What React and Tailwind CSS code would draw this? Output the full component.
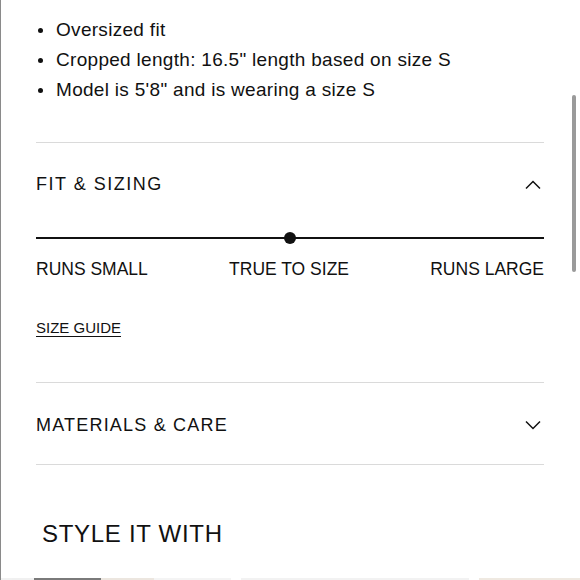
import React from 'react';

const BULLETS = [
  'Oversized fit',
  'Cropped length: 16.5" length based on size S',
  'Model is 5\'8" and is wearing a size S',
];

function Chevron({ up }) {
  return (
    <svg width="16" height="10" viewBox="0 0 16 10" fill="none" stroke="#111" strokeWidth="1.5">
      {up ? <path d="M1 8.5 L8 1.5 L15 8.5" /> : <path d="M1 1.5 L8 8.5 L15 1.5" />}
    </svg>
  );
}

export default function App() {
  return (
    <div
      className="relative w-[580px] h-[580px] overflow-hidden bg-white text-[#111] border-l border-[#8a8a8a]"
      style={{ fontFamily: '"Liberation Sans", Arial, sans-serif' }}
    >
      {/* scrollbar */}
      <div className="absolute left-[571px] top-[95px] w-[4px] h-[177px] rounded-full bg-[#9a9a9a]" />

      <div className="pl-[35px] pr-[36px] pt-[15px]">
        <ul className="text-[19px] leading-[30px] tracking-[0.3px]">
          {BULLETS.map((b) => (
            <li key={b} className="flex items-center">
              <span className="w-[5px] h-[5px] rounded-full bg-[#111] ml-[2px] mr-[13px]" />
              {b}
            </li>
          ))}
        </ul>

        <div className="mt-[37px] h-px bg-[#dadada]" />

        {/* Fit & sizing */}
        <div className="h-[81px] pt-[2px] flex items-center justify-between">
          <span className="text-[18px] tracking-[1.5px]">FIT &amp; SIZING</span>
          <span className="mr-[3px]"><Chevron up /></span>
        </div>

        <div className="relative mt-[13px] h-[2px] bg-[#111]">
          <div className="absolute left-[248px] top-[-5px] w-[12px] h-[12px] rounded-full bg-[#111]" />
        </div>

        <div className="mt-[18px] flex justify-between text-[17.5px] leading-[24px]">
          <span>RUNS SMALL</span>
          <span>TRUE TO SIZE</span>
          <span>RUNS LARGE</span>
        </div>

        <div className="mt-[37px] text-[15px] leading-[20px]">
          <span className="underline underline-offset-[3px]">SIZE GUIDE</span>
        </div>

        <div className="mt-[44px] h-px bg-[#dadada]" />

        {/* Materials */}
        <div className="h-[81px] pt-[3px] flex items-center justify-between">
          <span className="text-[18px] tracking-[1.2px]">MATERIALS &amp; CARE</span>
          <span className="mr-[3px]"><Chevron /></span>
        </div>

        <div className="h-px bg-[#dadada]" />

        <h2 className="mt-[53px] ml-[6px] text-[24px] leading-[32px] tracking-[0.7px]">STYLE IT WITH</h2>
      </div>

      {/* product image tops peeking in */}
      <div className="absolute left-0 top-[578px] w-[580px] flex gap-[10px]">
        <div className="flex w-[230px] h-[2px]">
          <div className="w-[11px] bg-[#f1f1f1]" />
          <div className="w-[22px] bg-[#f0f0f0]" />
          <div className="w-[67px] bg-[#7a7a7a]" />
          <div className="w-[53px] bg-[#ece6df]" />
          <div className="flex-1 bg-[#f4f4f4]" />
        </div>
        <div className="w-[228px] h-[2px] bg-[#f2f2f2]" />
        <div className="flex-1 h-[2px] bg-[#efe9e1]" />
      </div>
    </div>
  );
}
